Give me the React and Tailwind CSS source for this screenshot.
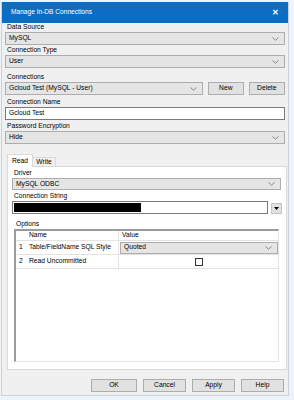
const Chevron = () => (
  <svg width="7" height="4" viewBox="0 0 7 4" className="shrink-0">
    <path d="M0.5 0.5 L3.5 3.2 L6.5 0.5" fill="none" stroke="#7a7a7a" strokeWidth="0.9" />
  </svg>
);

const Select = ({ value, className = '' }) => (
  <div className={`flex items-center justify-between bg-[#e5e5e5] border border-[#adadad] pl-[3px] pr-[5px] ${className}`}>
    <span>{value}</span>
    <Chevron />
  </div>
);

const Btn = ({ label, className = '' }) => (
  <div className={`flex items-center justify-center bg-[#e1e1e1] border border-[#adadad] ${className}`}>{label}</div>
);

const Label = ({ text, className = '' }) => (
  <div className={`flex items-end pl-[2px] pb-[1px] ${className}`}>{text}</div>
);

export default function App() {
  return (
    <div
      className="w-[294px] h-[400px] bg-[#eef2f9] overflow-hidden text-[6.7px] leading-none text-black"
      style={{ fontFamily: '"Liberation Sans", Arial, sans-serif' }}
    >
      <div className="ml-[1px] mt-[2px] w-[288px] h-[394px] bg-[#f0f0f0] border-x border-b border-[#c9d3e0] flex flex-col">
        {/* title bar */}
        <div className="h-[21px] bg-[#0b6ec4] flex items-center justify-between pl-[9px] pr-[9px] text-white">
          <span className="text-[6.6px]">Manage In-DB Connections</span>
          <span className="font-bold text-[8px]">✕</span>
        </div>

        <div className="flex flex-col px-[3px]">
          <Label text="Data Source" className="h-[9px]" />
          <Select value="MySQL" className="h-[13px]" />
          <Label text="Connection Type" className="h-[10px]" />
          <Select value="User" className="h-[13px]" />
          <Label text="Connections" className="h-[14px]" />
          <div className="flex h-[13px] gap-[5px]">
            <Select value="Gcloud Test (MySQL - User)" className="w-[201px]" />
            <Btn label="New" className="w-[36px]" />
            <Btn label="Delete" className="w-[37px]" />
          </div>
          <Label text="Connection Name" className="h-[12px]" />
          <div className="h-[13px] bg-white border border-[#7a7a7a] flex items-center pl-[3px]">Gcloud Test</div>
          <Label text="Password Encryption" className="h-[11px]" />
          <Select value="Hide" className="h-[13px]" />

          {/* tabs */}
          <div className="flex items-end h-[22px] pl-[2px]">
            <div className="h-[13px] w-[26px] bg-white border-x border-t border-[#d9d9d9] flex items-center justify-center -mb-px relative z-10">Read</div>
            <div className="h-[9px] w-[23px] bg-[#f0f0f0] border-r border-t border-[#d9d9d9] flex items-center justify-center">Write</div>
          </div>
          <div className="ml-[2px] w-[280px] h-[204px] bg-white border border-[#d9d9d9] flex flex-col px-[4px]">
            <Label text="Driver" className="h-[11px]" />
            <Select value="MySQL ODBC" className="h-[12px] w-[269px]" />
            <Label text="Connection String" className="h-[11px]" />
            <div className="flex h-[13px] gap-[3px]">
              <div className="w-[258px] bg-white border border-[#7a7a7a] flex items-center pl-px">
                <div className="w-[127px] h-[9px] bg-black" />
              </div>
              <div className="w-[11px] h-[11px] mt-[2px] bg-[#e1e1e1] border border-[#c4c4c4] flex items-center justify-center">
                <svg width="5" height="3" viewBox="0 0 5 3"><path d="M0 0 L5 0 L2.5 3 Z" fill="#000" /></svg>
              </div>
            </div>
            <Label text="Options" className="h-[15px] pl-[4px]" />
            {/* options grid */}
            <div className="ml-[2px] w-[265px] h-[133px] bg-white border-l-2 border-t-2 border-[#9b9b9b] border-r border-b border-r-[#e3e3e3] border-b-[#e3e3e3] flex flex-col">
              <div className="flex h-[10px] border-b border-[#e3e3e3]">
                <div className="w-[11px]" />
                <div className="w-[92px] border-r border-[#e3e3e3] flex items-center pl-[2px]">Name</div>
                <div className="flex-1 flex items-center pl-[3px]">Value</div>
              </div>
              <div className="flex h-[14px] border-b border-[#e3e3e3]">
                <div className="w-[11px] flex items-center pl-[3px]">1</div>
                <div className="w-[92px] border-r border-[#e3e3e3] flex items-center pl-[2px]">Table/FieldName SQL Style</div>
                <div className="flex-1 flex items-center pl-px">
                  <Select value="Quoted" className="h-[12px] w-full" />
                </div>
              </div>
              <div className="flex h-[14px] border-b border-[#e3e3e3]">
                <div className="w-[11px] flex items-center pl-[3px]">2</div>
                <div className="w-[92px] border-r border-[#e3e3e3] flex items-center pl-[2px]">Read Uncommitted</div>
                <div className="flex-1 flex items-center justify-center">
                  <div className="w-[8px] h-[8px] border border-[#333] bg-white" />
                </div>
              </div>
            </div>
          </div>

          {/* bottom buttons */}
          <div className="flex justify-end gap-[6px] pr-px pt-[9px]">
            <Btn label="OK" className="w-[46px] h-[13px]" />
            <Btn label="Cancel" className="w-[43px] h-[13px]" />
            <Btn label="Apply" className="w-[43px] h-[13px]" />
            <Btn label="Help" className="w-[43px] h-[13px]" />
          </div>
        </div>
      </div>
    </div>
  );
}
